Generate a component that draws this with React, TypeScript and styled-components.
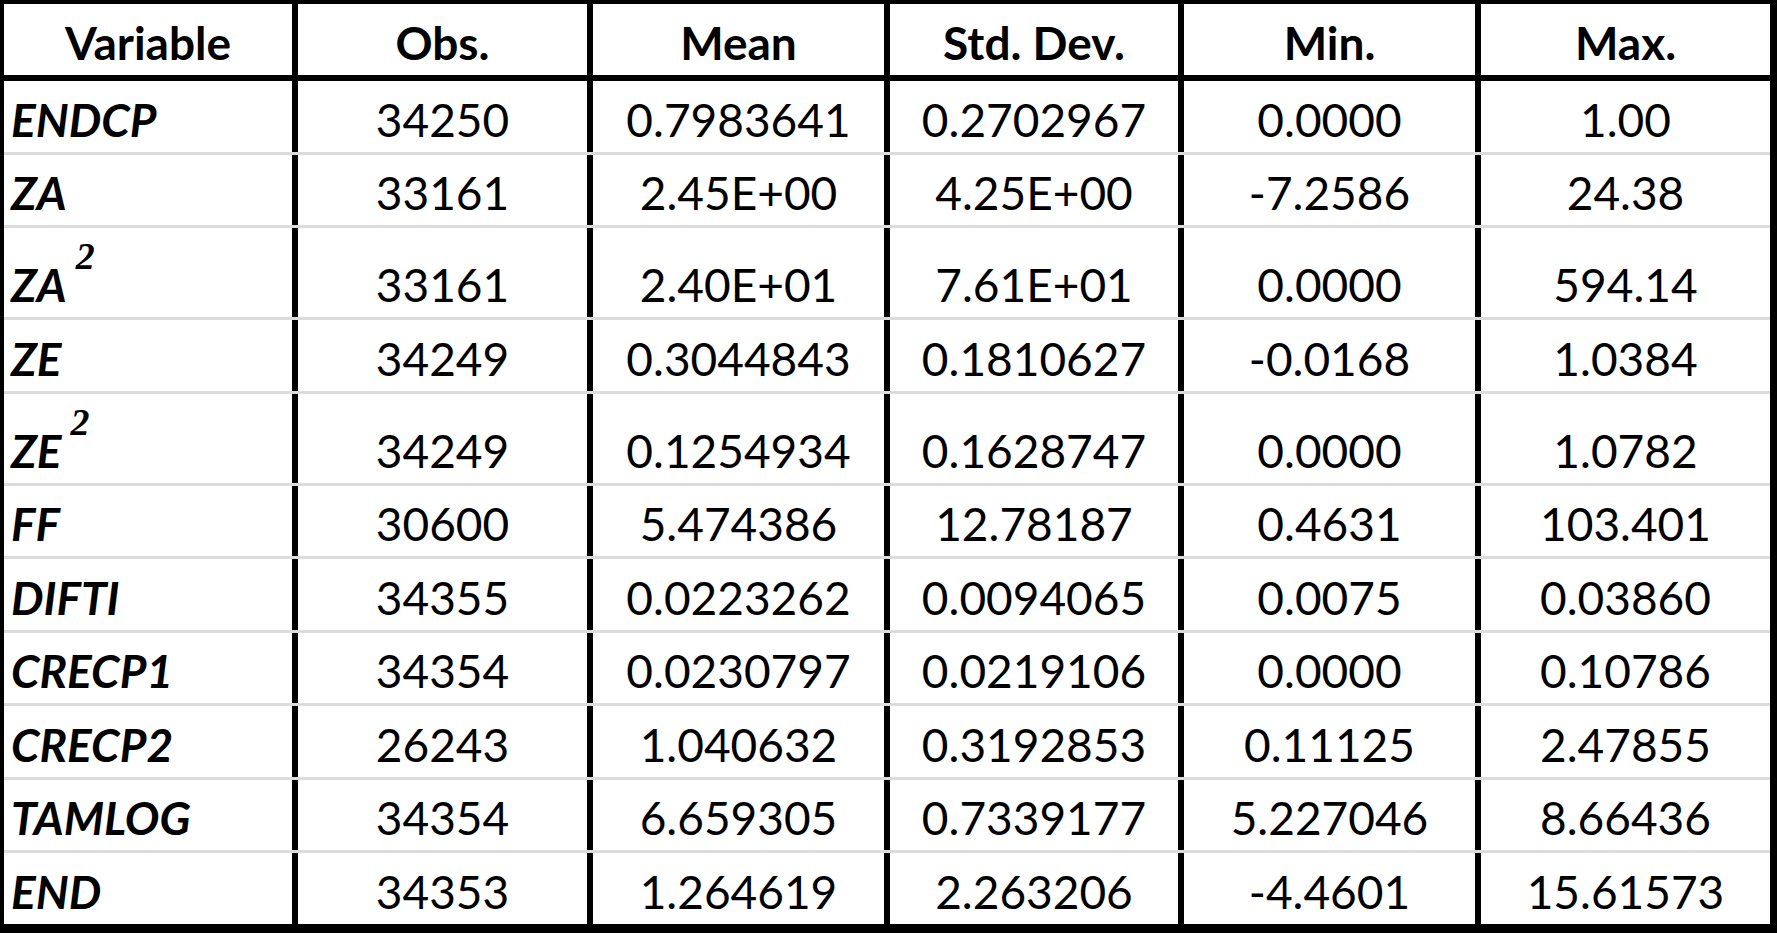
import React from 'react';
import styled, { createGlobalStyle } from 'styled-components';

const GlobalStyle = createGlobalStyle`
  html, body {
    margin: 0;
    padding: 0;
    background: #fff;
    overflow: hidden;
  }
  body {
    font-family: Lato, "Liberation Sans", sans-serif;
    color: #000;
  }
`;

// column widths incl. the black divider on the left of columns 2..6
const COLS = '288px 295px 297px 294px 297px 295px';

const Table = styled.div`
  width: 1777px;
  box-sizing: border-box;
  border-style: solid;
  border-color: #000;
  border-width: 4px 7px 9px 4px;
  background: #fff;
`;

const Row = styled.div<{ $head?: boolean; $tall?: boolean; $first?: boolean }>`
  display: grid;
  grid-template-columns: ${COLS};
  height: ${(p) => (p.$head ? '71px' : p.$tall ? '89px' : '70.5px')};
  border-bottom: ${(p) => (p.$head ? '6px solid #000' : 'none')};
  border-top: ${(p) => (p.$head || p.$first ? 'none' : '3px solid #dcdcdc')};
`;

const Cell = styled.div<{ $left?: boolean; $head?: boolean; $divider?: boolean }>`
  display: flex;
  align-items: flex-end;
  justify-content: ${(p) => (p.$left ? 'flex-start' : 'center')};
  box-sizing: border-box;
  border-left: ${(p) => (p.$divider ? '6px solid #000' : 'none')};
  padding: 0 0 9px ${(p) => (p.$left ? '7px' : '0')};
  font-size: 46px;
  line-height: 1;
  font-weight: ${(p) => (p.$head ? 700 : 400)};
  white-space: nowrap;
`;

const VarName = styled.span`
  font-weight: 700;
  font-style: italic;
`;

const Sup = styled.span`
  font-family: "Liberation Serif", serif;
  font-style: italic;
  font-weight: 700;
  font-size: 38px;
  vertical-align: 33px;
  margin-left: 9px;
`;

type Line = { name: string; sq?: boolean; vals: string[] };

const headers = ['Variable', 'Obs.', 'Mean', 'Std. Dev.', 'Min.', 'Max.'];

const lines: Line[] = [
  { name: 'ENDCP', vals: ['34250', '0.7983641', '0.2702967', '0.0000', '1.00'] },
  { name: 'ZA', vals: ['33161', '2.45E+00', '4.25E+00', '-7.2586', '24.38'] },
  { name: 'ZA', sq: true, vals: ['33161', '2.40E+01', '7.61E+01', '0.0000', '594.14'] },
  { name: 'ZE', vals: ['34249', '0.3044843', '0.1810627', '-0.0168', '1.0384'] },
  { name: 'ZE', sq: true, vals: ['34249', '0.1254934', '0.1628747', '0.0000', '1.0782'] },
  { name: 'FF', vals: ['30600', '5.474386', '12.78187', '0.4631', '103.401'] },
  { name: 'DIFTI', vals: ['34355', '0.0223262', '0.0094065', '0.0075', '0.03860'] },
  { name: 'CRECP1', vals: ['34354', '0.0230797', '0.0219106', '0.0000', '0.10786'] },
  { name: 'CRECP2', vals: ['26243', '1.040632', '0.3192853', '0.11125', '2.47855'] },
  { name: 'TAMLOG', vals: ['34354', '6.659305', '0.7339177', '5.227046', '8.66436'] },
  { name: 'END', vals: ['34353', '1.264619', '2.263206', '-4.4601', '15.61573'] },
];

export default function App() {
  return (
    <>
      <GlobalStyle />
      <Table>
        <Row $head>
          {headers.map((h, i) => (
            <Cell key={h} $head $divider={i > 0}>
              {h}
            </Cell>
          ))}
        </Row>
        {lines.map((l, r) => (
          <Row key={r} $tall={l.sq} $first={r === 0}>
            <Cell $left>
              <span>
                <VarName>{l.name}</VarName>
                {l.sq && <Sup>2</Sup>}
              </span>
            </Cell>
            {l.vals.map((v, i) => (
              <Cell key={i} $divider>
                {v}
              </Cell>
            ))}
          </Row>
        ))}
      </Table>
    </>
  );
}
